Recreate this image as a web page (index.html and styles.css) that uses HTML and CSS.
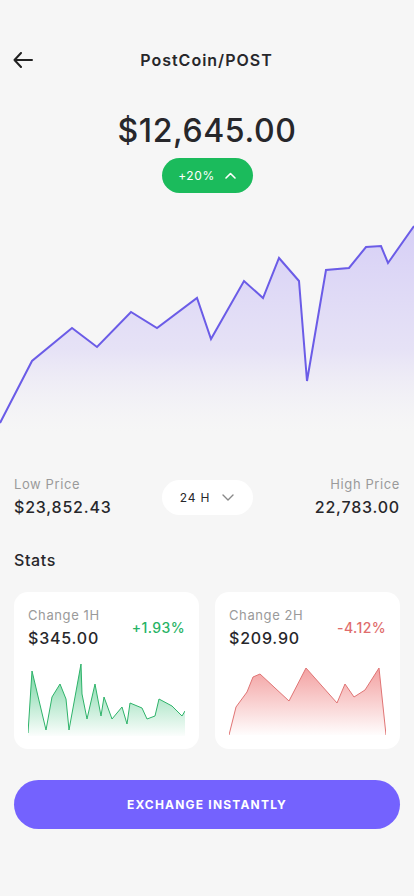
FILE: index.html
```html
<!DOCTYPE html>
<html lang="en">
<head>
    <meta charset="UTF-8">
    <meta name="viewport" content="width=device-width, initial-scale=1.0">
    <title>PostCoin/POST</title>
    <link rel="stylesheet" href="styles.css">
</head>
<body>
    <header class="top-bar">
        <svg class="back" width="20" height="16" viewBox="0 0 20 16" fill="none" stroke="#222" stroke-width="2" stroke-linecap="round" stroke-linejoin="round">
            <path d="M19 8H1.5M8 1L1.5 8L8 15"/>
        </svg>
        <h1>PostCoin/POST</h1>
        <span></span>
    </header>

    <section class="price-block">
        <div class="price">$12,645.00</div>
        <div class="badge">
            <span>+20%</span>
            <svg width="11" height="7" viewBox="0 0 11 7" fill="none" stroke="#fff" stroke-width="1.6" stroke-linecap="round" stroke-linejoin="round"><path d="M1 6L5.5 1.5L10 6"/></svg>
        </div>
    </section>

    <svg class="main-chart" viewBox="0 0 414 215" preserveAspectRatio="none">
        <defs>
            <linearGradient id="mainFill" x1="0" y1="0" x2="0" y2="1">
                <stop offset="0" stop-color="#d6cff6"/>
                <stop offset="0.6" stop-color="#e2ddf6" stop-opacity="0.8"/>
                <stop offset="1" stop-color="#efedf5" stop-opacity="0"/>
            </linearGradient>
        </defs>
        <path fill="url(#mainFill)" d="M0 203L32 141L72 108L97 127L131 92L157 108L197 78L211 119L244 61L263 78L279 38L299 61L307 161L326 50L349 48L366 27L381 26L388 43L414 6V212H0Z"/>
        <path fill="none" stroke="#6b5ce7" stroke-width="2" stroke-linejoin="miter" d="M0 203L32 141L72 108L97 127L131 92L157 108L197 78L211 119L244 61L263 78L279 38L299 61L307 161L326 50L349 48L366 27L381 26L388 43L414 6"/>
    </svg>

    <section class="range">
        <div class="range-item">
            <div class="label">Low Price</div>
            <div class="value">$23,852.43</div>
        </div>
        <div class="period">
            <span>24 H</span>
            <svg width="12" height="7" viewBox="0 0 12 7" fill="none" stroke="#888" stroke-width="1.4" stroke-linecap="round" stroke-linejoin="round"><path d="M1 1L6 6L11 1"/></svg>
        </div>
        <div class="range-item right">
            <div class="label">High Price</div>
            <div class="value">22,783.00</div>
        </div>
    </section>

    <h2 class="stats-title">Stats</h2>

    <section class="stats">
        <div class="card">
            <div class="card-head">
                <div>
                    <div class="label">Change 1H</div>
                    <div class="value">$345.00</div>
                </div>
                <div class="delta up">+1.93%</div>
            </div>
            <svg class="mini" viewBox="0 0 157 76" preserveAspectRatio="none">
                <defs>
                    <linearGradient id="greenFill" x1="0" y1="0" x2="0" y2="1">
                        <stop offset="0" stop-color="#3cc27a" stop-opacity="0.75"/>
                        <stop offset="1" stop-color="#3cc27a" stop-opacity="0.02"/>
                    </linearGradient>
                </defs>
                <path fill="url(#greenFill)" d="M0 73L4 11L18 70L24 37L32 24L38 39L41 70L53 4L54 34L59 59L67 24L73 56L76 37L84 59L94 47L99 64L102 43L114 48L119 59L127 56L131 39L144 46L154 56L157 51V76H0Z"/>
                <path fill="none" stroke="#2eb36a" stroke-width="1" d="M0 73L4 11L18 70L24 37L32 24L38 39L41 70L53 4L54 34L59 59L67 24L73 56L76 37L84 59L94 47L99 64L102 43L114 48L119 59L127 56L131 39L144 46L154 56L157 51"/>
            </svg>
        </div>
        <div class="card">
            <div class="card-head">
                <div>
                    <div class="label">Change 2H</div>
                    <div class="value">$209.90</div>
                </div>
                <div class="delta down">-4.12%</div>
            </div>
            <svg class="mini" viewBox="0 0 157 76" preserveAspectRatio="none">
                <defs>
                    <linearGradient id="redFill" x1="0" y1="0" x2="0" y2="1">
                        <stop offset="0" stop-color="#f08a8a" stop-opacity="0.8"/>
                        <stop offset="1" stop-color="#f08a8a" stop-opacity="0.02"/>
                    </linearGradient>
                </defs>
                <path fill="url(#redFill)" d="M0 75L7 47L18 32L24 17L31 14L60 41L77 8L108 43L116 24L125 37L136 30L150 8L157 75Z"/>
                <path fill="none" stroke="#e07474" stroke-width="1" d="M0 75L7 47L18 32L24 17L31 14L60 41L77 8L108 43L116 24L125 37L136 30L150 8L157 75"/>
            </svg>
        </div>
    </section>

    <button class="exchange">EXCHANGE INSTANTLY</button>
</body>
</html>
```

FILE: styles.css
```css
body {
    margin: 0;
    background-color: #f6f6f6;
    font-family: Inter, "Noto Sans", sans-serif;
    color: #27272b;
}

.top-bar {
    display: grid;
    grid-template-columns: 24px 1fr 24px;
    align-items: center;
    padding: 48px 14px 0 13px;
}

.top-bar h1 {
    margin: 0;
    text-align: center;
    font-size: 16px;
    line-height: 24px;
    font-weight: 600;
    letter-spacing: 1px;
}

.price-block {
    display: flex;
    flex-direction: column;
    align-items: center;
    margin-top: 39px;
}

.price {
    font-size: 32px;
    line-height: 40px;
    font-weight: 500;
    letter-spacing: 0.6px;
}

.badge {
    display: flex;
    align-items: center;
    justify-content: center;
    gap: 10px;
    width: 91px;
    height: 35px;
    margin-top: 7px;
    border-radius: 18px;
    background-color: #1bbb5c;
    color: #fff;
    font-size: 12px;
    letter-spacing: 0.6px;
}

.main-chart {
    display: block;
    width: 414px;
    height: 215px;
    margin-top: 27px;
}

.range {
    display: grid;
    grid-template-columns: 1fr auto 1fr;
    align-items: start;
    margin-top: 40px;
    padding: 0 14px;
}

.label {
    font-size: 13px;
    line-height: 18px;
    color: #9a9a9a;
    letter-spacing: 0.6px;
}

.value {
    margin-top: 3px;
    font-size: 16px;
    line-height: 22px;
    font-weight: 500;
    letter-spacing: 0.8px;
}

.range-item.right {
    text-align: right;
}

.period {
    display: flex;
    align-items: center;
    justify-content: center;
    gap: 12px;
    width: 91px;
    height: 35px;
    margin-top: 5px;
    border-radius: 18px;
    background-color: #fff;
    font-size: 12px;
    letter-spacing: 0.8px;
}

.stats-title {
    margin: 31px 14px 0;
    font-size: 16px;
    line-height: 22px;
    font-weight: 500;
    letter-spacing: 0.6px;
}

.stats {
    display: grid;
    grid-template-columns: 1fr 1fr;
    gap: 16px;
    margin-top: 21px;
    padding: 0 14px;
}

.card {
    background-color: #fff;
    border-radius: 14px;
    padding: 14px 14px 13px;
}

.card-head {
    display: flex;
    justify-content: space-between;
    align-items: flex-start;
}

.delta {
    margin-top: 13px;
    font-size: 14px;
    line-height: 18px;
    font-weight: 500;
    letter-spacing: 0.4px;
}

.delta.up {
    color: #27b365;
}

.delta.down {
    color: #e06c6c;
}

.mini {
    display: block;
    width: 157px;
    height: 76px;
    margin-top: 11px;
}

.exchange {
    display: block;
    width: 386px;
    height: 49px;
    margin: 31px 14px 0;
    border: none;
    border-radius: 25px;
    background-color: #7462fe;
    color: #fff;
    font-family: Inter, "Noto Sans", sans-serif;
    font-size: 12px;
    font-weight: 700;
    letter-spacing: 1.2px;
    cursor: pointer;
}
```
